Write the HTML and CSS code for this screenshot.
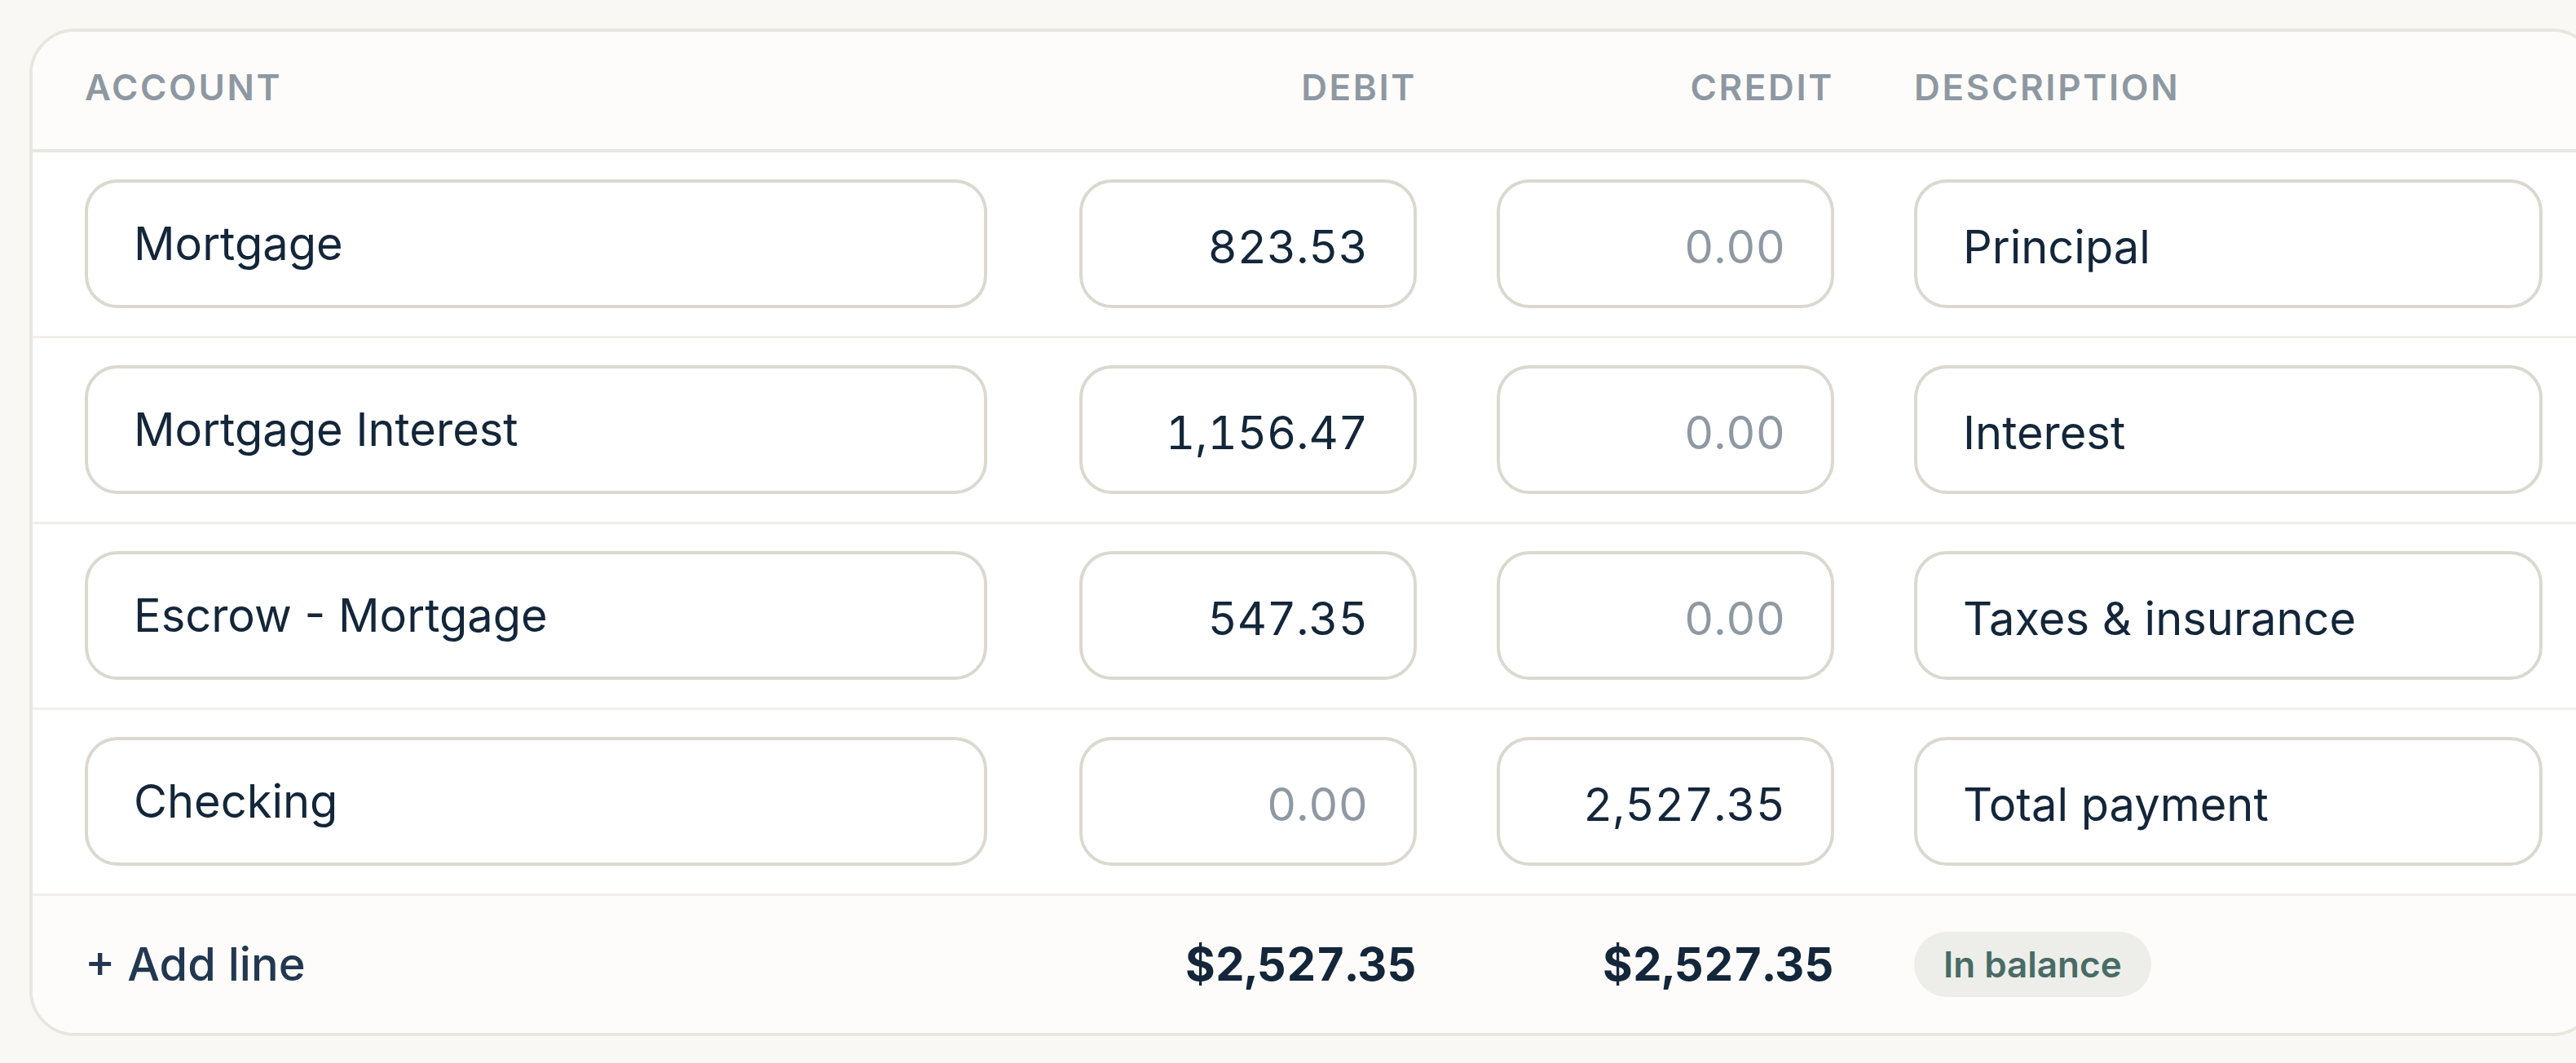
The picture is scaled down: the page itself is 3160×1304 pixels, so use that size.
FILE: index.html
```html
<!DOCTYPE html>
<html lang="en">
<head>
  <meta charset="UTF-8">
  <title>Journal Entry</title>
  <link rel="stylesheet" href="styles.css">
</head>
<body>

  <div class="entry">
    <div class="entry-head">
      <div>Account</div>
      <div class="right">Debit</div>
      <div class="right">Credit</div>
      <div>Description</div>
    </div>

    <div class="line">
      <input class="field account" type="text" value="Mortgage">
      <input class="field num" type="text" value="823.53" placeholder="0.00">
      <input class="field num" type="text" placeholder="0.00">
      <input class="field" type="text" value="Principal">
    </div>

    <div class="line">
      <input class="field account" type="text" value="Mortgage Interest">
      <input class="field num" type="text" value="1,156.47" placeholder="0.00">
      <input class="field num" type="text" placeholder="0.00">
      <input class="field" type="text" value="Interest">
    </div>

    <div class="line">
      <input class="field account" type="text" value="Escrow - Mortgage">
      <input class="field num" type="text" value="547.35" placeholder="0.00">
      <input class="field num" type="text" placeholder="0.00">
      <input class="field" type="text" value="Taxes &amp; insurance">
    </div>

    <div class="line">
      <input class="field account" type="text" value="Checking">
      <input class="field num" type="text" placeholder="0.00">
      <input class="field num" type="text" value="2,527.35" placeholder="0.00">
      <input class="field" type="text" value="Total payment">
    </div>

    <div class="entry-foot">
      <button class="add-line">+ Add line</button>
      <div class="total">$2,527.35</div>
      <div class="total">$2,527.35</div>
      <div><span class="badge">In balance</span></div>
    </div>
  </div>

</body>
</html>
```

FILE: styles.css
```css
* {
  box-sizing: border-box;
}

body {
  margin: 0;
  padding: 35px 36px;
  background: #f9f8f4;
  font-family: Inter, "Noto Sans", sans-serif;
  color: #13263a;
  overflow: hidden;
}

.entry {
  width: 3151px;
  background: #fff;
  border: 4px solid #e8e6df;
  border-radius: 56px;
  overflow: hidden;
}

/* shared column layout */
.entry-head,
.line,
.entry-foot {
  display: grid;
  grid-template-columns: 1fr 414px 414px 771px;
  column-gap: 98px;
  align-items: center;
  padding-left: 64px;
  padding-right: 64px;
}

.entry-head {
  height: 148px;
  padding-bottom: 8px;
  background: #fdfcfa;
  border-bottom: 4px solid #e8e6df;
  font-size: 44px;
  font-weight: 600;
  letter-spacing: 0.06em;
  text-transform: uppercase;
  color: #8d98a2;
}

.right {
  text-align: right;
}

.line {
  padding-top: 33px;
  padding-bottom: 34px;
  border-bottom: 3px solid #efeeea;
}

.field {
  width: 100%;
  height: 158px;
  padding: 8px 56px 0;
  border: 4px solid #dbd8cf;
  border-radius: 40px;
  background: #fff;
  font-family: inherit;
  font-size: 56px;
  color: #13263a;
  outline: none;
}

.field::placeholder {
  color: #8f99a3;
}

.field.account {
  max-width: 1107px;
  padding-top: 0;
}

.field.num {
  text-align: right;
  font-variant-numeric: tabular-nums;
}

.entry-foot {
  height: 168px;
  background: #fdfcfa;
}

.add-line {
  justify-self: start;
  padding: 0;
  border: none;
  background: none;
  font-family: inherit;
  font-size: 56px;
  font-weight: 500;
  color: #223850;
  cursor: pointer;
}

.total {
  text-align: right;
  font-size: 56px;
  font-weight: 700;
  font-variant-numeric: tabular-nums;
}

.badge {
  display: inline-flex;
  align-items: center;
  height: 80px;
  padding: 0 36px;
  border-radius: 40px;
  background: #edeee9;
  color: #496b66;
  font-size: 44px;
  font-weight: 600;
}
```
